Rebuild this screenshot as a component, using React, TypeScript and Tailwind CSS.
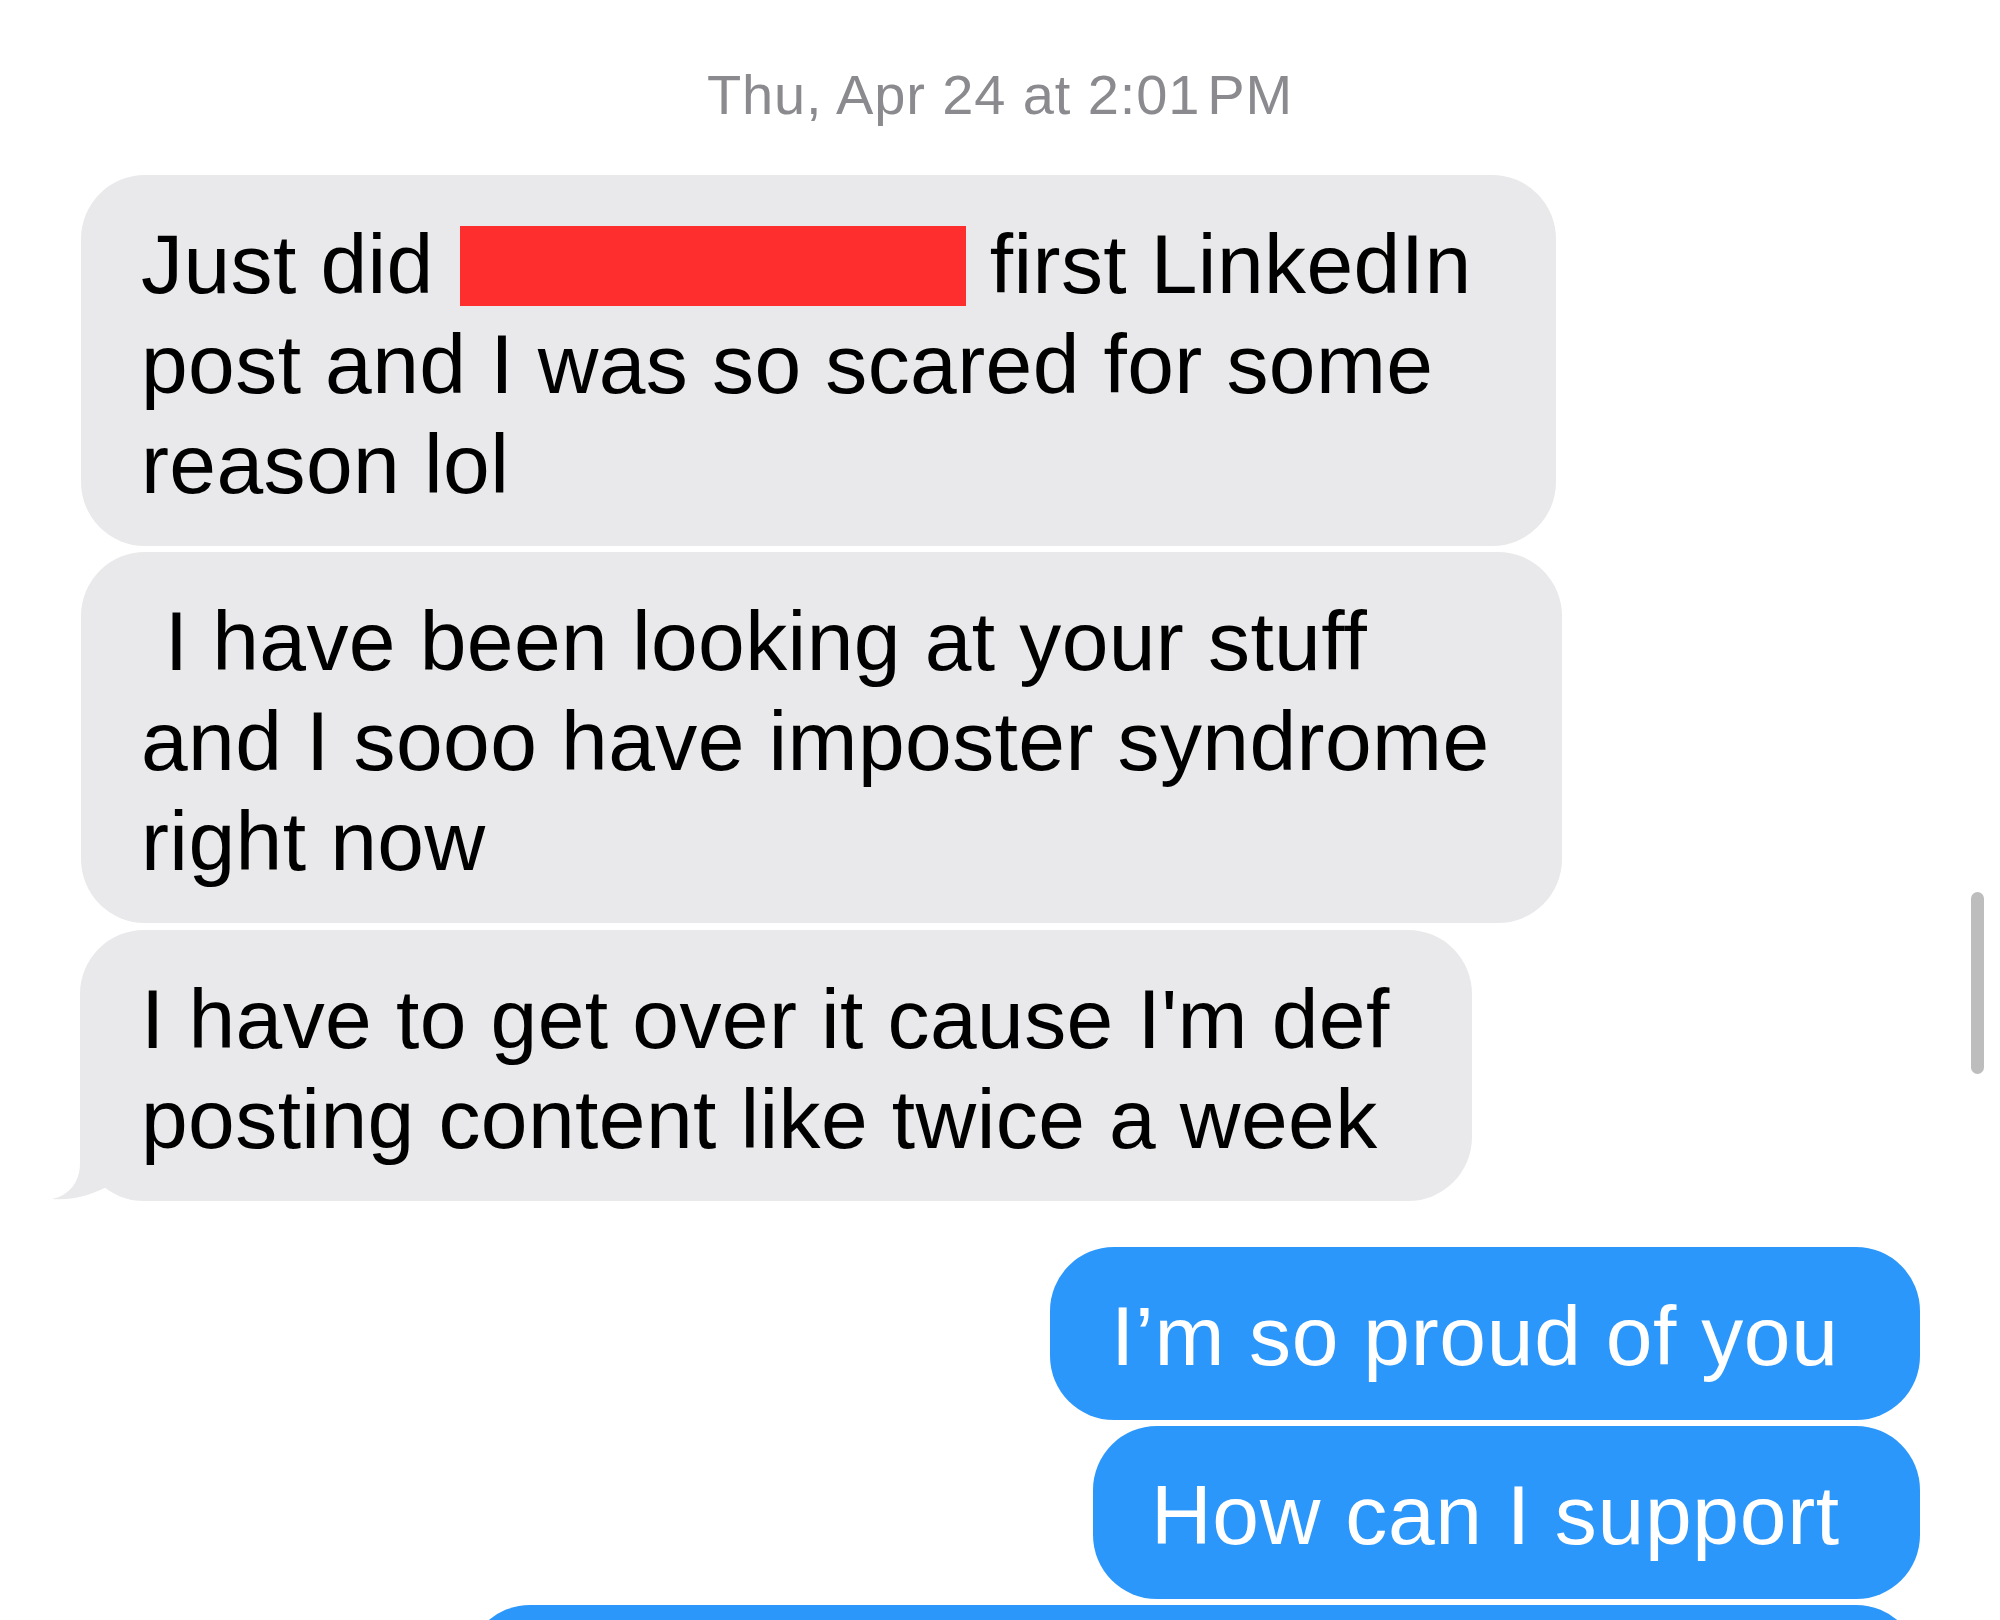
import React from "react";

function Tail() {
  return (
    <svg
      className="absolute left-[-30px] bottom-0"
      width="110"
      height="73"
      viewBox="0 0 110 73"
      fill="none"
    >
      <path
        d="M30 0 L30 35 C30 55 18 68 2 71 C22 73 45 66 60 57 C72 66 85 73 100 73 L100 0 Z"
        fill="#e9e9eb"
      />
    </svg>
  );
}

export default function App() {
  return (
    <div className="relative w-[2000px] h-[1620px] overflow-hidden bg-white font-['Liberation_Sans',Arial,sans-serif]">
      {/* timestamp */}
      <div className="pt-[63px] h-[127px] flex justify-center">
        <div className="text-[56px] leading-[64px] tracking-[0.9px] text-[#8b8b8f] whitespace-nowrap">
          <span>Thu, Apr 24</span>
          <span> at 2:01</span>
          <span className="ml-[7px]">PM</span>
        </div>
      </div>

      <div className="mt-[48px] flex flex-col tracking-[0.4px]">
        {/* gray bubble 1 */}
        <div className="ml-[81px] w-[1475px] rounded-[64px] bg-[#e9e9eb] pl-[60px] pt-[39px] pb-[32px] text-[84px] leading-[100px] text-black whitespace-nowrap">
          Just did
          <span className="inline-block ml-[26px] mr-[24px] w-[506px] h-[80px] bg-[#ff2e2e] align-[-13px]"></span>
          first LinkedIn
          <br />
          post and I was so scared for some
          <br />
          reason lol
        </div>

        {/* gray bubble 2 */}
        <div className="mt-[6px] ml-[81px] w-[1481px] rounded-[64px] bg-[#e9e9eb] pl-[60px] pt-[39px] pb-[32px] text-[84px] leading-[100px] text-black whitespace-nowrap">
          {"\u00a0"}I have been looking at your stuff
          <br />
          and I sooo have imposter syndrome
          <br />
          right now
        </div>

        {/* gray bubble 3 with tail */}
        <div className="relative mt-[7px] ml-[80px] w-[1392px] rounded-[64px] bg-[#e9e9eb] pl-[61px] pt-[39px] pb-[32px] text-[84px] leading-[100px] text-black whitespace-nowrap">
          <Tail />
          <span className="relative">I have to get over it cause I'm def</span>
          <br />
          <span className="relative">posting content like twice a week</span>
        </div>

        {/* blue bubble 1 */}
        <div className="mt-[46px] self-end mr-[80px] w-[870px] rounded-[64px] bg-[#2c97fb] pl-[61px] pt-[39px] pb-[34px] text-[84px] leading-[100px] text-white whitespace-nowrap tracking-[0.7px]">
          I’m so proud of you
        </div>

        {/* blue bubble 2 */}
        <div className="mt-[6px] self-end mr-[80px] w-[827px] rounded-[64px] bg-[#2c97fb] pl-[58px] pt-[39px] pb-[34px] text-[84px] leading-[100px] text-white whitespace-nowrap tracking-[0.7px]">
          How can I support
        </div>

        {/* blue bubble 3 (cut off) */}
        <div className="mt-[6px] self-end mr-[80px] w-[1454px] h-[240px] rounded-[64px] bg-[#2c97fb]"></div>
      </div>

      {/* scroll indicator */}
      <div className="absolute left-[1971px] top-[892px] w-[13px] h-[182px] rounded-full bg-[#bdbdbd]"></div>
    </div>
  );
}
